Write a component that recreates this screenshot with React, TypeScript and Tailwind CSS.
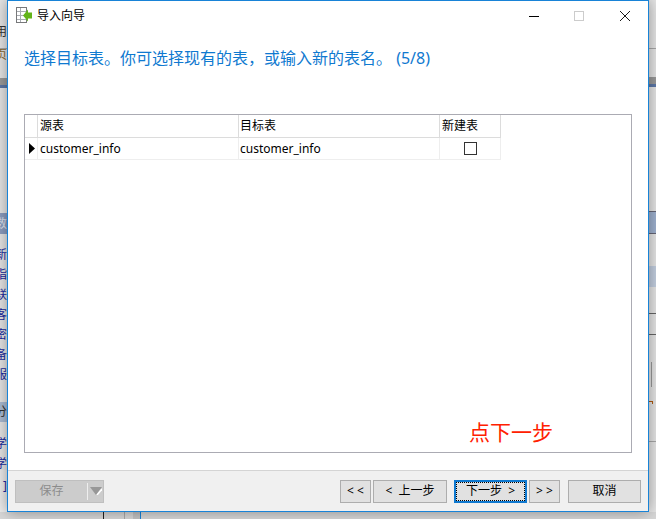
const FONT = "font-['Noto_Sans','Noto_Sans_CJK_SC',sans-serif]"

function NavButton({ label, className }: { label: string; className: string }) {
  return (
    <button className={`h-[23px] bg-[#e1e1e1] border border-[#adadad] text-[12px] leading-none text-black whitespace-pre ${className}`}>
      {label}
    </button>
  )
}

function LeftStrip() {
  const links = ['新', '指', '联', '客', '密', '备', '服']
  return (
    <div className="w-[7px] h-full flex flex-col overflow-hidden bg-[#e6e6e6] text-[12px] leading-none">
      <div className="h-[26px] shrink-0" />
      <div className="h-[14px] shrink-0 flex justify-end text-[#333]">用</div>
      <div className="h-[9px] shrink-0 border-b border-[#a8a8a8]" />
      <div className="h-[12px] shrink-0 flex justify-end items-end text-[#8a6a30]">页</div>
      <div className="h-[17px] shrink-0" />
      <div className="h-[7px] shrink-0 bg-[#9a9a9a]" />
      <div className="h-[3px] shrink-0 bg-[#5d78a8]" />
      <div className="h-[125px] shrink-0" />
      <div className="h-[21px] shrink-0 bg-[#8c9dc0] flex justify-end items-center text-[#dfe4ee]">数</div>
      <div className="h-[15px] shrink-0" />
      <div className="flex flex-col gap-[8px] items-end text-[#1a2aa0]">
        {links.map((c) => (
          <div key={c} className="h-[12px]">{c}</div>
        ))}
      </div>
      <div className="h-[21px] shrink-0" />
      <div className="h-[20px] shrink-0 bg-[#aabbd3] flex justify-end items-center text-[#333]">分</div>
      <div className="h-[16px] shrink-0" />
      <div className="flex flex-col gap-[8px] items-end text-[#1a2aa0]">
        <div className="h-[12px]">学</div>
        <div className="h-[12px]">学</div>
      </div>
      <div className="flex-1 bg-[#ececec] flex justify-end pt-[10px] text-[#1a2aa0]">]</div>
    </div>
  )
}

function RightStrip() {
  return (
    <div className="w-[7px] h-full flex flex-col overflow-hidden bg-[#e6e6e6]">
      <div className="h-[49px] shrink-0 border-b border-[#a8a8a8]" />
      <div className="h-[28px] shrink-0" />
      <div className="h-[7px] shrink-0 bg-[#9a9a9a]" />
      <div className="h-[3px] shrink-0 bg-[#5d78a8]" />
      <div className="h-[124px] shrink-0" />
      <div className="h-[23px] shrink-0 bg-[#9fb2d0] border-y border-[#667]" />
      <div className="h-[32px] shrink-0" />
      <div className="h-[21px] shrink-0 bg-[#c3cfe0]" />
      <div className="h-[27px] shrink-0 border-b border-[#666]" />
      <div className="h-[21px] shrink-0 border-b border-[#666]" />
      <div className="h-[27px] shrink-0" />
      <div className="h-[25px] shrink-0 pl-[2px]">
        <div className="h-full w-px bg-[#999]" />
      </div>
      <div className="h-[14px] shrink-0" />
      <div className="h-[3px] w-[4px] shrink-0 border-t border-r border-[#b05a10]" />
      <div className="h-[38px] shrink-0 border-b border-[#a8a8a8]" />
    </div>
  )
}

function TitleIcon() {
  return (
    <svg width="17" height="17" viewBox="0 0 17 17" className="shrink-0">
      <rect x="0.5" y="0.5" width="10" height="15" fill="#fff" stroke="#77787a" />
      <path d="M1 4.5h9M1 8.5h9M1 12.5h9M4.5 1v14" stroke="#a9adb2" fill="none" />
      <path d="M7 8.5L12 2.5V5.5H16V11.5H12V14.5z" fill="#63b41a" />
    </svg>
  )
}

export default function App() {
  return (
    <div className={`w-[656px] h-[519px] overflow-hidden flex flex-col bg-[#e6e6e6] ${FONT}`}>
      <div className="h-[512px] flex shrink-0">
        <LeftStrip />
        <div className="relative z-10 w-[642px] h-[512px] flex flex-col bg-white border border-[#1883d7] shadow-[0_0_14px_rgba(0,0,0,0.38)]">
          <div className="h-[29px] shrink-0 flex items-center pl-[8px]">
            <TitleIcon />
            <span className="ml-[4px] text-[12px] text-black">导入向导</span>
            <div className="ml-auto flex items-center pr-[18px]">
              <svg width="10" height="10" viewBox="0 0 10 10">
                <path d="M0 5.5h10" stroke="#000" />
              </svg>
              <svg width="10" height="10" viewBox="0 0 10 10" className="ml-[35px]">
                <rect x="0.5" y="0.5" width="9" height="9" fill="none" stroke="#cccccc" />
              </svg>
              <svg width="10" height="10" viewBox="0 0 10 10" className="ml-[36px]">
                <path d="M0 0l10 10M10 0L0 10" stroke="#000" strokeWidth="0.9" />
              </svg>
            </div>
          </div>
          <h1 className="mt-[16px] ml-[16px] h-[24px] text-[16px] leading-[24px] font-normal text-[#0f79d0] whitespace-pre">
            选择目标表。你可选择现有的表，或输入新的表名。 (5/8)
          </h1>
          <div className="relative mt-[44px] ml-[16px] w-[608px] h-[339px] shrink-0 border border-[#ababb3]">
            <div className="grid grid-cols-[13px_201px_201px_61px] grid-rows-[23px_22px] w-[476px] text-[12px] text-black">
              <div className="border-r border-b border-[#dcdcdc]" />
              <div className="border-r border-b border-[#dcdcdc] pl-[2px] flex items-center">源表</div>
              <div className="border-r border-b border-[#dcdcdc] pl-[1px] flex items-center">目标表</div>
              <div className="border-r border-b border-[#dcdcdc] pl-[2px] flex items-center">新建表</div>
              <div className="border-r border-b border-[#eeeeee] flex items-center pl-[4px]">
                <svg width="6" height="11" viewBox="0 0 6 11">
                  <path d="M0 0l6 5.5L0 11z" fill="#000" />
                </svg>
              </div>
              <div className="border-r border-b border-[#eeeeee] pl-[2px] flex items-center">customer_info</div>
              <div className="border-r border-b border-[#eeeeee] pl-[1px] flex items-center">customer_info</div>
              <div className="border-r border-b border-[#eeeeee] flex items-center justify-center">
                <div className="w-[13px] h-[13px] border border-[#333]" />
              </div>
            </div>
            <div className="absolute left-[444px] top-[307px] text-[21px] leading-none text-[#ff2000]">点下一步</div>
          </div>
          <div className="mt-[17px] flex-1 flex items-center pl-[7px] pr-[7px] bg-[#f0f0f0] border-t border-[#d4d4d4]">
            <div className="w-[89px] h-[23px] flex items-center bg-[#cccccc] border border-[#bfbfbf]">
              <span className="w-[71px] text-center text-[12px] text-[#8c8c8c]">保存</span>
              <div className="w-px h-[17px] bg-[#eeeeee]" />
              <svg width="12" height="8" viewBox="0 0 12 8" className="ml-[2px]">
                <path d="M0 0h12L6 8z" fill="#979797" />
                <path d="M7 8l5-6" stroke="#fff" strokeWidth="1.5" />
              </svg>
            </div>
            <NavButton label="< <" className="ml-auto w-[31px]" />
            <NavButton label="<  上一步" className="ml-[2px] w-[74px]" />
            <button className="ml-[7px] w-[73px] h-[23px] bg-[#e1e1e1] border-2 border-[#0f79d0] text-[12px] leading-none text-black whitespace-pre">
              <span className="flex items-center justify-center w-full h-full border border-dotted border-black">下一步  &gt;</span>
            </button>
            <NavButton label="> >" className="ml-[2px] w-[31px]" />
            <NavButton label="取消" className="ml-[8px] w-[73px]" />
          </div>
        </div>
        <RightStrip />
      </div>
      <div className="h-[7px] shrink-0 flex bg-[#d8d8d8]">
        <div className="w-[104px] border-r border-[#222]" />
        <div className="w-[21px] border-r border-[#aaa]" />
        <div className="w-[8px]" />
        <div className="w-[8px] bg-[#c4c4c4] border-r border-[#1883d7]" />
      </div>
    </div>
  )
}
